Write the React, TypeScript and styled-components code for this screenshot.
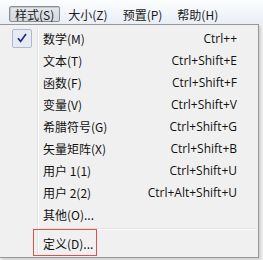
import React from 'react'
import styled, { createGlobalStyle } from 'styled-components'

const Global = createGlobalStyle`
  html, body {
    margin: 0;
    padding: 0;
    background: #f0f0f0;
    font-family: "Noto Sans CJK SC", "Noto Sans", sans-serif;
    font-size: 12px;
    color: #000;
  }
`

const topMenus = ['样式(S)', '大小(Z)', '预置(P)', '帮助(H)']

const items = [
  { label: '数学(M)', key: 'Ctrl++', checked: true },
  { label: '文本(T)', key: 'Ctrl+Shift+E' },
  { label: '函数(F)', key: 'Ctrl+Shift+F' },
  { label: '变量(V)', key: 'Ctrl+Shift+V' },
  { label: '希腊符号(G)', key: 'Ctrl+Shift+G' },
  { label: '矢量矩阵(X)', key: 'Ctrl+Shift+B' },
  { label: '用户 1(1)', key: 'Ctrl+Shift+U' },
  { label: '用户 2(2)', key: 'Ctrl+Alt+Shift+U' },
  { label: '其他(O)...', key: '' },
]

function App() {
  return (
    <Screen>
      <Global />
      <MenuBar>
        {topMenus.map((m, i) => (
          <TopItem key={m} $open={i === 0}>{m}</TopItem>
        ))}
      </MenuBar>
      <Dropdown>
        <Gutter />
        <List>
          {items.map((it) => (
            <Row key={it.label}>
              <CheckCell>
                {it.checked && (
                  <CheckBox>
                    <svg width="12" height="12" viewBox="0 0 12 12">
                      <path d="M2 6.2 L4.6 9.4 L10 2" fill="none" stroke="#1c2a8a" strokeWidth="1.7" />
                    </svg>
                  </CheckBox>
                )}
              </CheckCell>
              <Label>{it.label}</Label>
              <Shortcut>{it.key}</Shortcut>
            </Row>
          ))}
          <Separator />
          <Row>
            <CheckCell />
            <Label>定义(D)...</Label>
            <Shortcut />
          </Row>
        </List>
        <Highlight />
      </Dropdown>
    </Screen>
  )
}

export default App

const Screen = styled.div`
  width: 263px;
  height: 260px;
  overflow: hidden;
  position: relative;
`

const MenuBar = styled.div`
  height: 24px;
  display: flex;
  align-items: flex-start;
  padding: 6px 0 0 9px;
  box-sizing: border-box;
  background: linear-gradient(#fcfdfe, #e9eef5);
  gap: 1px;
`

const TopItem = styled.div<{ $open?: boolean }>`
  height: 16px;
  line-height: 15px;
  padding: 0 ${(p) => (p.$open ? '5px' : '6px')};
  box-sizing: border-box;
  border: 1px solid ${(p) => (p.$open ? '#8a8d92' : 'transparent')};
  border-radius: 2px;
  background: ${(p) => (p.$open ? 'linear-gradient(#e3e6eb, #d5d9df)' : 'transparent')};
  box-shadow: ${(p) => (p.$open ? 'inset 1px 1px 0 #c4c8ce' : 'none')};
  white-space: nowrap;
  color: #1a1a1a;
`

const Dropdown = styled.div`
  position: relative;
  width: 259px;
  height: 234px;
  box-sizing: border-box;
  border: 1px solid #979797;
  border-left: none;
  background: #f0f0f0;
  box-shadow: 2px 2px 2px rgba(0, 0, 0, 0.12);
`

const Gutter = styled.div`
  position: absolute;
  left: 37px;
  top: 2px;
  bottom: 2px;
  width: 1px;
  background: #e2e3e3;
  border-right: 1px solid #ffffff;
`

const List = styled.div`
  position: relative;
  padding-top: 2px;
  display: flex;
  flex-direction: column;
`

const Row = styled.div`
  height: 22px;
  display: flex;
  align-items: center;
`

const CheckCell = styled.div`
  width: 43px;
  height: 22px;
  display: flex;
  align-items: center;
  padding-left: 12px;
  box-sizing: border-box;
`

const CheckBox = styled.div`
  width: 20px;
  height: 19px;
  box-sizing: border-box;
  border: 1px solid #aeb9cf;
  border-radius: 2px;
  background: #e6ebf3;
  display: flex;
  align-items: center;
  justify-content: center;
`

const Label = styled.div`
  flex: 1;
  white-space: nowrap;
  color: #111;
`

const Shortcut = styled.div`
  padding-right: 21px;
  white-space: nowrap;
  text-align: right;
  color: #111;
  font-family: "Open Sans", "Noto Sans", sans-serif;
`

const Separator = styled.div`
  height: 1px;
  margin: 3px 2px 2px 40px;
  background: #e0e0e0;
  border-bottom: 1px solid #ffffff;
`

const Highlight = styled.div`
  position: absolute;
  left: 33px;
  top: 204px;
  width: 64px;
  height: 27px;
  box-sizing: border-box;
  border: 1px solid #e05050;
`
